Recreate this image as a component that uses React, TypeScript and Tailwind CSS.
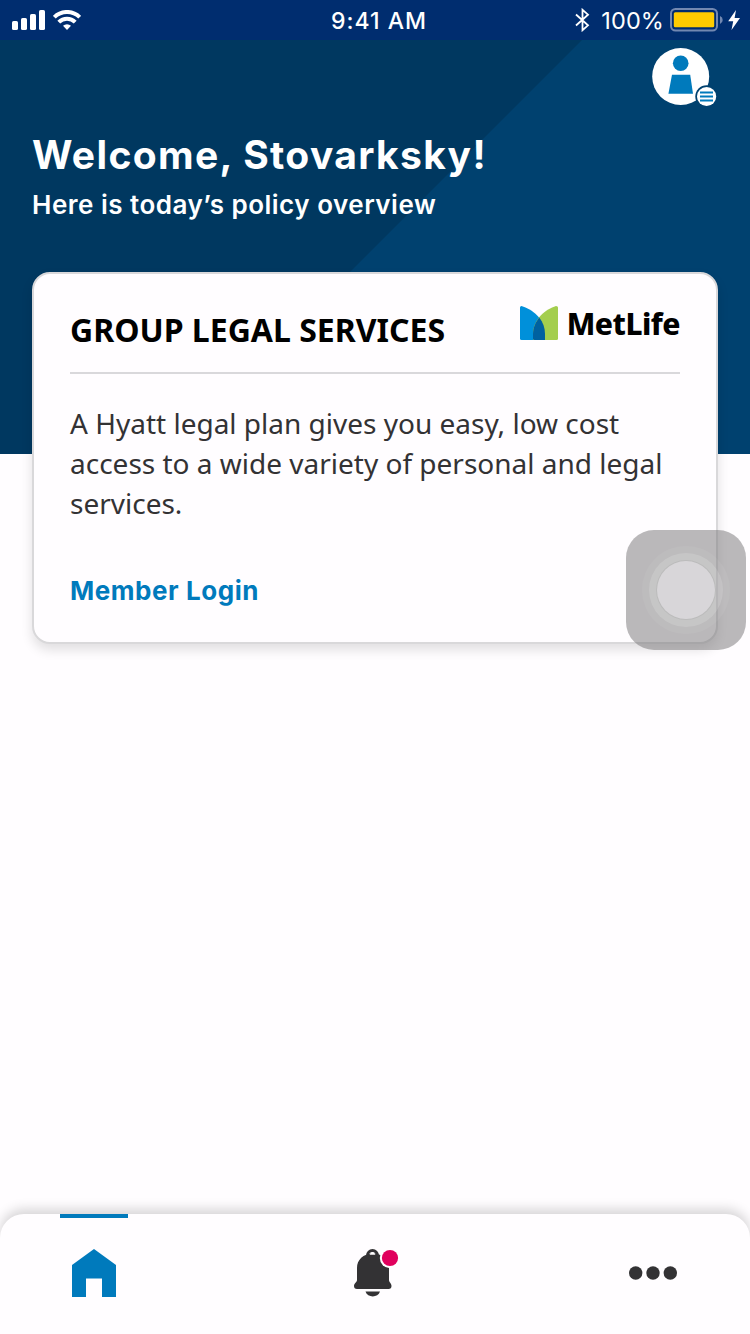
import React from "react";

function StatusBar() {
  return (
    <header className="grid h-10 shrink-0 grid-cols-3 items-center bg-[#002d6f] pl-3 pr-[10px] text-white">
      <div className="flex items-center gap-2">
        <svg width="33" height="20" viewBox="0 0 33 20" fill="currentColor">
          <rect x="0" y="11" width="6" height="9" rx="1.6" />
          <rect x="9" y="8" width="6" height="12" rx="1.6" />
          <rect x="18" y="4" width="6" height="16" rx="1.6" />
          <rect x="27" y="0" width="6" height="20" rx="1.6" />
        </svg>
        <svg width="28" height="20" viewBox="0 0 28 20" fill="none" stroke="currentColor" strokeWidth="4">
          <path d="M1.3 7.2a18 18 0 0 1 25.4 0" />
          <path d="M5.8 12.2a11.6 11.6 0 0 1 16.4 0" />
          <path d="M10 15.8a5.8 5.8 0 0 1 8 0L14 20z" fill="currentColor" stroke="none" />
        </svg>
      </div>
      <time className="pl-[6px] pt-[2px] text-center font-[Inter,sans-serif] text-[23px] font-medium leading-[38px] tracking-[1px]">
        9:41 AM
      </time>
      <div className="flex items-center justify-end">
        <svg width="15" height="24" viewBox="0 0 15 24" fill="none" stroke="currentColor" strokeWidth="1.8">
          <path d="M1 6.5 13 17.3 7.5 22.2V1.8L13 6.7 1 17.5" />
        </svg>
        <span className="ml-[11px] pt-[2px] font-[Inter,sans-serif] text-[23.500px] leading-[38px] tracking-[0.1px]">100%</span>
        <svg className="ml-[6px]" width="53" height="24" viewBox="0 0 53 24">
          <rect x="1" y="1" width="46" height="21.5" rx="4.5" fill="none" stroke="#7288b1" strokeWidth="2" />
          <rect x="3.8" y="4.2" width="40.4" height="15" rx="1.5" fill="#ffcc00" />
          <path d="M50 8a4.3 4.3 0 0 1 0 8z" fill="#7288b1" />
        </svg>
        <svg className="ml-[5px]" width="12" height="20" viewBox="0 0 12 20" fill="currentColor">
          <path d="M8 0 0.2 11.3h5L3.5 20 12 8H6.6z" />
        </svg>
      </div>
    </header>
  );
}

function ProfileButton() {
  return (
    <button aria-label="Profile" className="mr-[31px] self-end">
      <svg width="67" height="62" viewBox="0 0 67 62">
        <circle cx="28.7" cy="28.5" r="28.5" fill="#fff" />
        <circle cx="28.7" cy="15.3" r="7.8" fill="#007abc" />
        <path d="M20 26.8h18.2L41 45.8H16.4z" fill="#007abc" />
        <circle cx="54.6" cy="48.5" r="11.3" fill="#00416f" />
        <circle cx="54.6" cy="48.5" r="9.6" fill="#fff" />
        <path d="M48 44.5h13M48 48.5h13M48 52.5h13" stroke="#007abc" strokeWidth="2" />
      </svg>
    </button>
  );
}

function Hero() {
  return (
    <section className="relative flex h-[414px] shrink-0 flex-col bg-[#003860] pt-2 text-white">
      <div className="absolute inset-0 bg-[#00416f] [clip-path:polygon(582px_0,100%_0,100%_100%,168px_100%)]" />
      <div className="relative flex flex-col">
        <ProfileButton />
        <h1 className="mt-[21px] pl-8 font-[Inter,sans-serif] text-[39px] font-bold leading-[48px] tracking-[1.35px]">
          Welcome, Stovarksky!
        </h1>
        <p className="mt-[9px] pl-8 font-[Inter,sans-serif] text-[26px] font-semibold leading-[34px] tracking-[0.5px]">
          Here is today’s policy overview
        </p>
      </div>
    </section>
  );
}

function MetLifeLogo() {
  return (
    <div className="flex h-[34px] items-center">
      <svg width="38" height="34" viewBox="0 0 38 34">
        <path d="M1.5 0C12 3 25 13 25 28v6H1.5A1.5 1.5 0 0 1 0 32.5v-31Q0 0 1.5 0z" fill="#0090da" />
        <path d="M36 0C26 3 13 13 13 28v6h23.5a1.5 1.5 0 0 0 1.5-1.5v-31Q38 0 36 0z" fill="#a4ce4e" />
        <path d="M19.3 11.5C23 16 25 22 25 28v6H14.500q-1.500 0-1.500-1.500v-4.500c0-6 2.500-12 6.300-16.500z" fill="#0061a0" />
      </svg>
      <span className="ml-[9px] pt-[2px] font-['Noto_Sans',sans-serif] text-[30px] font-extrabold leading-[34px] tracking-[-0.5px] text-black">
        MetLife
      </span>
    </div>
  );
}

function PolicyCard() {
  return (
    <article className="relative mx-8 -mt-[182px] flex h-[372px] shrink-0 flex-col rounded-[18px] border-2 border-[#d9d8da] bg-[#fffdff] px-9 shadow-[0_6px_12px_rgba(0,0,0,0.12)]">
      <div className="flex h-[100px] items-start justify-between border-b-2 border-[#d9d8db] pt-8">
        <h2 className="pt-[4px] font-['Noto_Sans',sans-serif] text-[32px] font-bold leading-10 text-black">
          GROUP LEGAL SERVICES
        </h2>
        <MetLifeLogo />
      </div>
      <p className="mt-[29px] whitespace-nowrap font-['Noto_Sans',sans-serif] text-[28px] leading-10 text-[#333234]">
        A Hyatt legal plan gives you easy, low cost
        <br />
        access to a wide variety of personal and legal
        <br />
        services.
      </p>
      <a className="mt-[50px] font-[Inter,sans-serif] text-[26px] font-bold leading-[36px] tracking-[0.55px] text-[#007abc]">
        Member Login
      </a>
    </article>
  );
}

function AssistiveTouch() {
  return (
    <div className="absolute left-[626px] top-[530px] flex size-[120px] items-center justify-center rounded-[28px] bg-[#757375]/50">
      <div className="flex size-[88px] items-center justify-center rounded-full bg-white/5">
        <div className="flex size-[74px] items-center justify-center rounded-full bg-white/15">
          <div className="size-[58px] rounded-full bg-[#d8d6d9] ring-1 ring-black/5" />
        </div>
      </div>
    </div>
  );
}

function TabBar() {
  return (
    <nav className="mt-auto flex h-[120px] shrink-0 justify-between rounded-t-[24px] bg-[#fffdff] pl-[60px] pr-[63px] shadow-[0_-5px_12px_rgba(0,0,0,0.16)]">
      <button aria-label="Home" className="flex w-[68px] flex-col items-center border-t-4 border-[#007abc] pt-[31px]">
        <svg width="44" height="48" viewBox="0 0 44 48" fill="#007abc">
          <path d="M22 0 44 16v32H30V29.500H14V48H0V16z" />
        </svg>
      </button>
      <button aria-label="Notifications" className="flex w-[68px] items-start pl-[14px] pt-[34px]">
        <svg width="46" height="50" viewBox="0 0 46 50">
          <path d="M13.500 10V7.500a5 5 0 0 1 10 0V10" fill="none" stroke="#333234" strokeWidth="3" />
          <path d="M19 5.500C9 5.500 3 12 3 20v12c0 2.500-3 3-3 6 0 2 1 3 3 3h31.500c2 0 3-1 3-3 0-3-2.500-3.500-2.500-6V20C35 12 29 5.500 19 5.500z" fill="#333234" />
          <path d="M15.500 6.800q3-5 6 0z" fill="#fffdff" />
          <path d="M11.500 43.500h14.500c-2 6.500-12.500 6.500-14.500 0z" fill="#333234" />
          <circle cx="36" cy="10" r="10.200" fill="#fffdff" />
          <circle cx="36" cy="10" r="8.100" fill="#e0005d" />
        </svg>
      </button>
      <button aria-label="More" className="flex w-[68px] items-start justify-end pr-[10px] pt-[52px]">
        <svg width="48" height="14" viewBox="0 0 48 14" fill="#333234">
          <circle cx="6.700" cy="7" r="6.700" />
          <circle cx="24" cy="7" r="6.700" />
          <circle cx="41.300" cy="7" r="6.700" />
        </svg>
      </button>
    </nav>
  );
}

export default function App() {
  return (
    <div className="relative flex h-[1334px] w-[750px] flex-col overflow-hidden bg-[#fffdff]">
      <StatusBar />
      <Hero />
      <PolicyCard />
      <TabBar />
      <AssistiveTouch />
    </div>
  );
}
